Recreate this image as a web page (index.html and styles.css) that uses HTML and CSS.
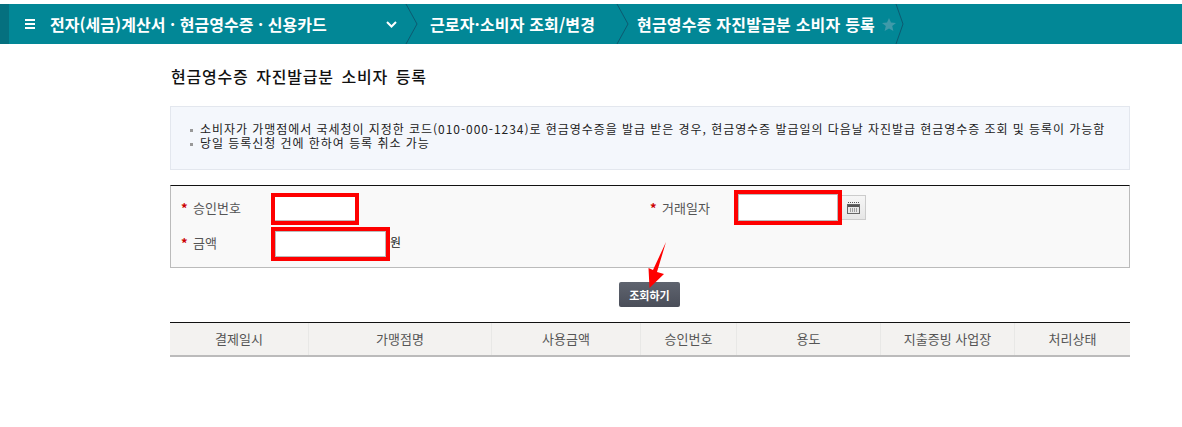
FILE: index.html
```html
<!DOCTYPE html>
<html lang="ko">
<head>
<meta charset="utf-8">
<title>현금영수증 자진발급분 소비자 등록</title>
<link rel="stylesheet" href="styles.css">
</head>
<body>
<nav class="topbar">
  <div class="stripe"></div>
  <div class="crumb crumb-main">
    <svg class="burger" width="11" height="10" viewBox="0 0 11 10"><path d="M0 1h10M0 5h10M0 9h10" stroke="#fff" stroke-width="2"/></svg>
    <span class="crumb-title">전자(세금)계산서 · 현금영수증 · 신용카드</span>
    <svg class="chev" width="11" height="7" viewBox="0 0 11 7"><path d="M1 1l4.500 4.500L10 1" fill="none" stroke="#fff" stroke-width="2"/></svg>
    <svg class="sep" width="14" height="40" viewBox="0 0 14 40"><path d="M1 0l11 20L1 40" fill="none" stroke="#0d5a70" stroke-width="1"/></svg>
  </div>
  <div class="crumb crumb-sub">
    <span>근로자·소비자 조회/변경</span>
    <svg class="sep" width="14" height="40" viewBox="0 0 14 40"><path d="M1 0l11 20L1 40" fill="none" stroke="#0d5a70" stroke-width="1"/></svg>
  </div>
  <div class="crumb crumb-last">
    <span>현금영수증 자진발급분 소비자 등록</span>
    <svg class="star" width="14" height="13" viewBox="0 0 14 13"><path d="M7 0l2 4.500 5 .4-3.800 3.200 1.200 4.900L7 10.400 2.600 13l1.200-4.900L0 4.900l5-.4z" fill="#3f9aa9"/></svg>
    <svg class="sep" width="10" height="40" viewBox="0 0 10 40"><path d="M1 0l7 20L1 40" fill="none" stroke="#0d5a70" stroke-width="1"/></svg>
  </div>
</nav>

<main class="content">
  <h1 class="page-title">현금영수증 자진발급분 소비자 등록</h1>

  <section class="notice">
    <p class="notice-line">소비자가 가맹점에서 국세청이 지정한 코드(010-000-1234)로 현금영수증을 발급 받은 경우, 현금영수증 발급일의 다음날 자진발급 현금영수증 조회 및 등록이 가능함</p>
    <p class="notice-line">당일 등록신청 건에 한하여 등록 취소 가능</p>
  </section>

  <form class="search-form">
    <div class="form-col form-col-left">
      <div class="field field-a">
        <label class="field-label"><span class="req">*</span>승인번호</label>
        <span class="mark mark-a"><input class="text-input" type="text"></span>
      </div>
      <div class="field field-b">
        <label class="field-label"><span class="req">*</span>금액</label>
        <span class="mark mark-b"><input class="text-input" type="text"></span>
        <span class="unit">원</span>
      </div>
    </div>
    <div class="form-col form-col-right">
      <div class="field field-c">
        <label class="field-label"><span class="req">*</span>거래일자</label>
        <span class="mark mark-c"><input class="text-input" type="text"></span>
        <button class="cal-btn" type="button" aria-label="달력">
          <svg width="13" height="12" viewBox="0 0 13 12"><path d="M1 .5h1M3 .5h1M5 .5h1M7 .5h1M9 .5h1M11 .5h1" stroke="#555" stroke-width="1"/><rect x=".5" y="2.500" width="12" height="9" fill="#e8e8e8" stroke="#666"/><rect x="1" y="3" width="11" height="2" fill="#555"/><path d="M3 7h1M5 7h1M7 7h1M9 7h1M3 9h1M5 9h1M7 9h1M9 9h1" stroke="#555"/></svg>
        </button>
      </div>
    </div>
  </form>

  <div class="actions">
    <button class="search-btn" type="button">조회하기</button>
    <svg class="arrow" width="22" height="50" viewBox="0 0 22 50"><path d="M20 2L11 32l7 2L3.500 48 2.500 28 7 30z" fill="#fe0000"/></svg>
  </div>

  <div class="result-table">
    <div class="th">결제일시</div>
    <div class="th">가맹점명</div>
    <div class="th">사용금액</div>
    <div class="th">승인번호</div>
    <div class="th">용도</div>
    <div class="th">지출증빙 사업장</div>
    <div class="th">처리상태</div>
  </div>
</main>
</body>
</html>
```
FILE: styles.css
```css
* { box-sizing: border-box; }
html, body { margin: 0; padding: 0; }
body {
  background: #fff;
  color: #222;
  font-family: "Noto Sans CJK KR", "Liberation Sans", sans-serif;
  font-size: 12px;
  overflow: hidden;
}
.topbar {
  display: flex;
  align-items: center;
  height: 40px;
  margin-top: 4px;
  background: #028796;
  color: #fff;
  font-size: 16px;
  font-weight: 700;
}
.stripe { width: 9px; height: 100%; background: #05707f; }
.crumb { display: flex; flex: none; align-items: center; height: 100%; white-space: nowrap; }
.crumb-main { width: 410px; padding-left: 16px; }
.burger { flex: none; }
.crumb-title { flex: none; width: 336px; margin-left: 14px; letter-spacing: .03px; }
.chev { flex: none; }
.sep { flex: none; margin-left: 8px; }
.crumb-sub { justify-content: space-between; width: 211px; padding-left: 11px; letter-spacing: .15px; }
.crumb-last { padding-left: 7px; letter-spacing: .21px; }
.star { flex: none; margin-left: 7px; }
.crumb-last .sep { margin-left: -1px; }

.content { width: 960px; margin-left: 170px; }
.page-title {
  height: 41px;
  margin: 21px 0 0;
  padding-left: 1px;
  color: #111;
  font-size: 16px;
  font-weight: 500;
  letter-spacing: .8px;
  word-spacing: 2.400px;
  line-height: 22px;
}
.notice {
  height: 64px;
  padding: 15px 0 0 19px;
  background: #f4f7fc;
  border: 1px solid #e3e7ee;
}
.notice-line {
  position: relative;
  margin: 0;
  padding-left: 10px;
  color: #222;
  font-size: 12px;
  letter-spacing: .95px;
  line-height: 14px;
  white-space: nowrap;
}
.notice-line::before {
  content: "";
  position: absolute;
  left: 0;
  top: 7px;
  width: 3px;
  height: 3px;
  background: #999;
}
.search-form {
  display: flex;
  height: 83px;
  margin-top: 15px;
  background: #f9f9f9;
  border: 1px solid #bbb;
  border-top-color: #111;
}
.form-col { display: flex; flex-direction: column; width: 479px; padding-left: 10px; }
.form-col-right { width: auto; padding-left: 0; }
.field { display: flex; align-items: center; }
.field-label {
  display: flex;
  flex: none;
  align-items: center;
  width: 90px;
  padding-bottom: 4px;
  color: #555;
  font-size: 13px;
}
.form-col-right .field-label { width: 84px; padding-bottom: 0; }
.req { flex: none; width: 12px; color: #c00; font-weight: 700; }
.mark { display: block; flex: none; background: #fff; border: 4px solid #fe0000; }
.text-input {
  display: block;
  width: 100%;
  height: 100%;
  padding: 0;
  background: #fff;
  border: 1px solid #bbb;
  border-radius: 0;
  outline: 0;
}
.field-a { margin-top: 7px; }
.mark-a { width: 88px; height: 32px; }
.mark-a .text-input { border-width: 0 0 1px; }
.field-b { margin-top: 2px; }
.mark-b { width: 119px; height: 34px; }
.unit { padding-bottom: 5px; color: #222; font-size: 12px; }
.field-c { margin-top: 4px; }
.mark-c { width: 108px; height: 35px; }
.cal-btn {
  display: flex;
  align-items: center;
  justify-content: center;
  width: 24px;
  height: 25px;
  padding: 0;
  background: linear-gradient(#f6f6f6, #e6e6e6);
  border: 1px solid #ccc;
  border-left: 0;
}
.actions {
  position: relative;
  display: flex;
  justify-content: center;
  height: 54px;
  padding-top: 14px;
  padding-right: 1px;
}
.search-btn {
  width: 61px;
  height: 25px;
  padding: 0;
  color: #fff;
  font-family: inherit;
  font-size: 11px;
  font-weight: 700;
  background: linear-gradient(#5f646f, #4a4e59);
  border: 0;
  border-radius: 2px;
}
.arrow { position: absolute; left: 476px; top: -28px; }
.result-table {
  display: grid;
  grid-template-columns: 139px 183px 149px 96px 144px 134px 115px;
  height: 35px;
  background: #f3f2f0;
  border-top: 1px solid #111;
  border-bottom: 2px solid #bbb;
}
.th {
  display: flex;
  align-items: center;
  justify-content: center;
  padding-bottom: 2px;
  color: #555;
  font-size: 13px;
  border-right: 1px solid #e8e8e6;
}
.th:last-child { border-right: 0; }
```
